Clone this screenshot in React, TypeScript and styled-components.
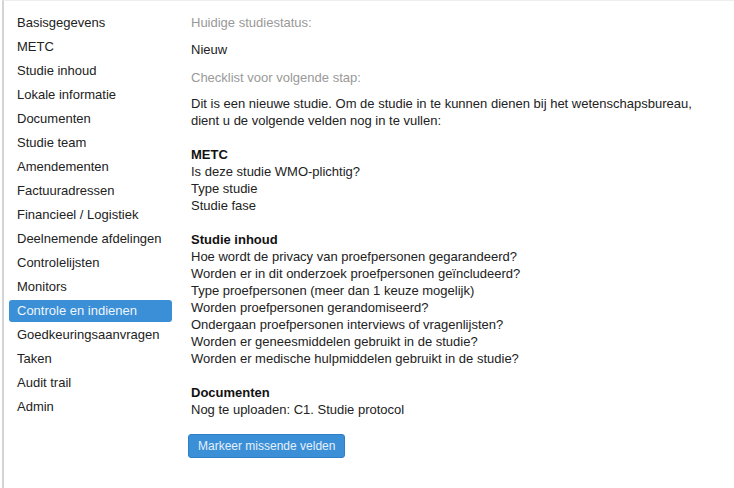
import React from 'react';
import styled, { createGlobalStyle } from 'styled-components';

const GlobalStyle = createGlobalStyle`
  html, body {
    margin: 0;
    padding: 0;
    background: #fff;
  }
  body {
    font-family: 'Liberation Sans', Arial, sans-serif;
    font-size: 13px;
    color: #222;
  }
`;

const navItems = [
  'Basisgegevens',
  'METC',
  'Studie inhoud',
  'Lokale informatie',
  'Documenten',
  'Studie team',
  'Amendementen',
  'Factuuradressen',
  'Financieel / Logistiek',
  'Deelnemende afdelingen',
  'Controlelijsten',
  'Monitors',
  'Controle en indienen',
  'Goedkeuringsaanvragen',
  'Taken',
  'Audit trail',
  'Admin',
];

const sections = [
  {
    title: 'METC',
    items: ['Is deze studie WMO-plichtig?', 'Type studie', 'Studie fase'],
  },
  {
    title: 'Studie inhoud',
    items: [
      'Hoe wordt de privacy van proefpersonen gegarandeerd?',
      'Worden er in dit onderzoek proefpersonen geïncludeerd?',
      'Type proefpersonen (meer dan 1 keuze mogelijk)',
      'Worden proefpersonen gerandomiseerd?',
      'Ondergaan proefpersonen interviews of vragenlijsten?',
      'Worden er geneesmiddelen gebruikt in de studie?',
      'Worden er medische hulpmiddelen gebruikt in de studie?',
    ],
  },
  {
    title: 'Documenten',
    items: ['Nog te uploaden: C1. Studie protocol'],
  },
];

export default function App() {
  const active = 'Controle en indienen';

  return (
    <>
      <GlobalStyle />
      <Page>
        <Sidebar>
          {navItems.map((item) => (
            <NavItem key={item} $active={item === active}>
              {item}
            </NavItem>
          ))}
        </Sidebar>
        <Content>
          <Label>Huidige studiestatus:</Label>
          <Value>Nieuw</Value>
          <Label>Checklist voor volgende stap:</Label>
          <Intro>
            Dit is een nieuwe studie. Om de studie in te kunnen dienen bij het
            wetenschapsbureau, dient u de volgende velden nog in te vullen:
          </Intro>
          {sections.map((section) => (
            <Section key={section.title}>
              <SectionTitle>{section.title}</SectionTitle>
              {section.items.map((line) => (
                <Line key={line}>{line}</Line>
              ))}
            </Section>
          ))}
          <Button>Markeer missende velden</Button>
        </Content>
      </Page>
    </>
  );
}

const Page = styled.div`
  display: flex;
  height: 487px;
  margin-left: 2px;
  border-top: 1px solid #eeeeee;
  border-left: 2px solid #d4d4d4;
`;

const Sidebar = styled.nav`
  width: 163px;
  flex-shrink: 0;
  display: flex;
  flex-direction: column;
  gap: 2px;
  padding: 11px 0 0 5px;
`;

const NavItem = styled.div<{ $active?: boolean }>`
  height: 22px;
  line-height: 22px;
  padding-left: 8px;
  border-radius: 3px;
  white-space: nowrap;
  color: ${(p) => (p.$active ? '#eef5fc' : '#222')};
  background: ${(p) => (p.$active ? '#3a8fd6' : 'transparent')};
`;

const Content = styled.div`
  flex: 1;
  padding: 13px 0 0 19px;
  line-height: 17px;
`;

const Label = styled.div`
  color: #999;
  margin-bottom: 10px;
`;

const Value = styled.div`
  margin-bottom: 11px;
`;

const Intro = styled.p`
  margin: -1px 0 0;
  width: 520px;
`;

const Section = styled.div`
  margin-top: 17px;
`;

const SectionTitle = styled.div`
  font-weight: bold;
  color: #111;
`;

const Line = styled.div``;

const Button = styled.button`
  margin-top: 16px;
  margin-left: -3px;
  height: 24px;
  padding: 0 9px;
  font-family: inherit;
  font-size: 12px;
  color: #e6f0fa;
  background: #3a8fd6;
  border: 1px solid #2d7fc8;
  border-radius: 3px;
  cursor: pointer;
`;
